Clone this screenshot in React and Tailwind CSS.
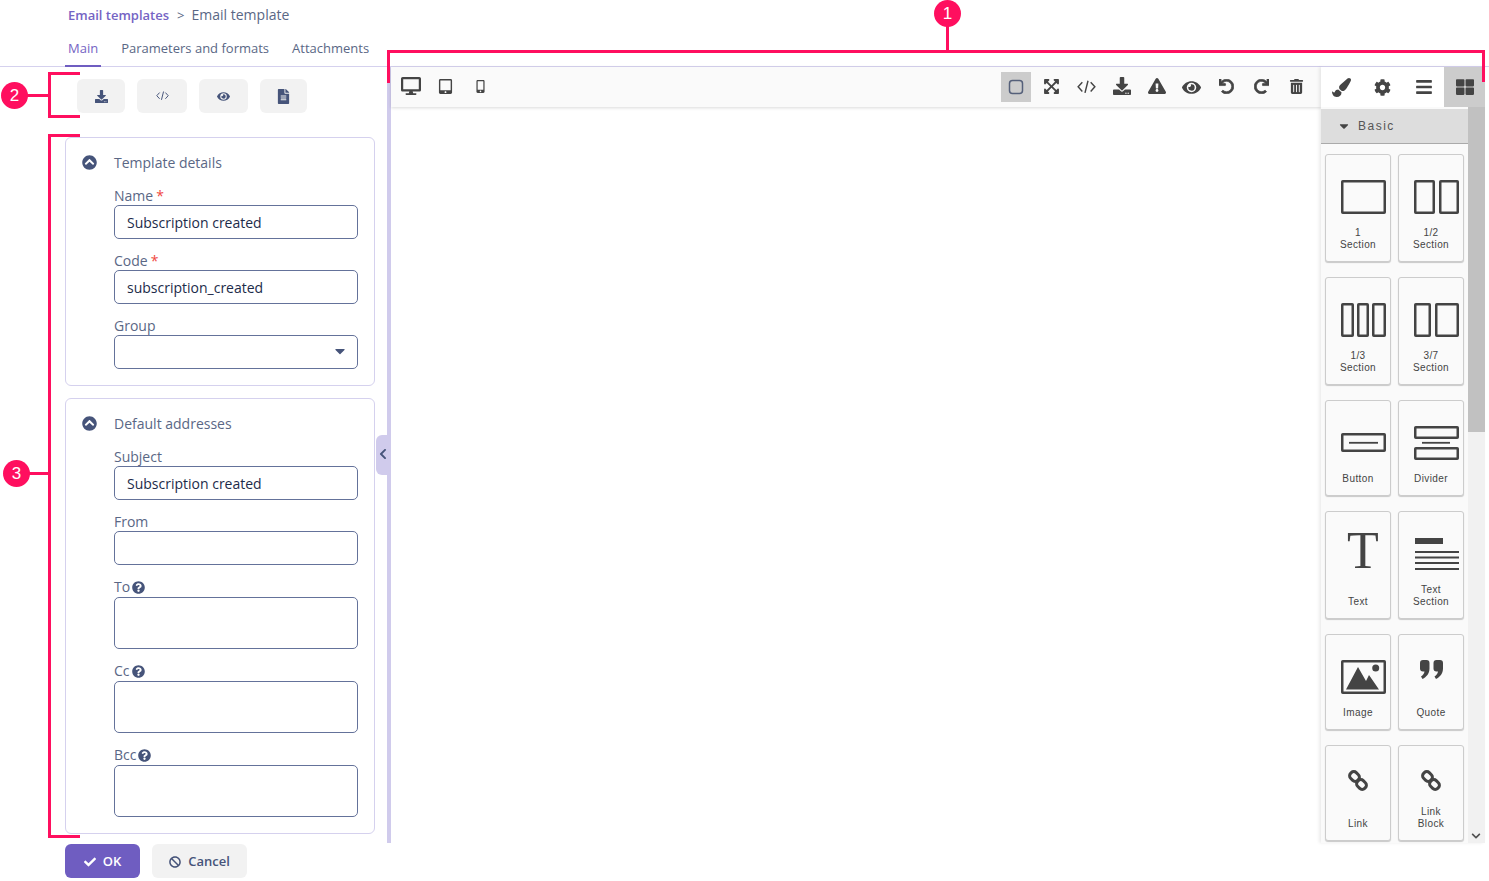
import {
    FaBan, FaBars, FaCaretDown, FaCheck, FaChevronCircleUp, FaChevronDown, FaChevronLeft, FaCog, FaDesktop,
    FaDownload, FaExclamationTriangle, FaExpandArrowsAlt, FaEye, FaFileAlt, FaMobileAlt, FaPaintBrush,
    FaQuestionCircle, FaRedo, FaTabletAlt, FaThLarge, FaTrashAlt, FaUndo,
} from "react-icons/fa";

const CodeIcon = ({ size = 19 }) => (
    <svg width={size} height={size * 0.72} viewBox="0 0 25 18" fill="none" stroke="currentColor" strokeWidth="1.9">
        <path d="M7 3 1.5 9 7 15M18 3l5.500 6-5.500 6M14.500 1l-4 16" />
    </svg>
);

const SectionRects = ({ rects }) => rects.map(([x, y, w, h]) => (
    <rect key={x + "-" + y} x={x + 1.25} y={y + 1.25} width={w - 2.5} height={h - 2.5} rx="0.5" fill="none" stroke="#444" strokeWidth="2.5" />
));

const quote = "M3 0h3.500a3 3 0 0 1 3 3v5.500c0 5-3 8.500-7 10.500l-1.500-2.500c2-1.200 3.200-2.800 3.500-5H3a3 3 0 0 1-3-3V3a3 3 0 0 1 3-3z";

const LinkArt = () => (
    <>
        <rect x="8.500" y="8.500" width="10" height="8" rx="3.500" transform="rotate(45 13.500 12.500)" fill="none" stroke="#444" strokeWidth="3" />
        <rect x="15.500" y="16.500" width="10" height="8" rx="3.500" transform="rotate(45 20.500 20.500)" fill="none" stroke="#444" strokeWidth="3" />
    </>
);

const blocks = [
    { lines: ["1", "Section"], h: "h-[108px]", art: <SectionRects rects={[[0, 7, 45, 34]]} /> },
    { lines: ["1/2", "Section"], h: "h-[108px]", art: <SectionRects rects={[[0, 7, 21, 34], [25, 7, 20, 34]]} /> },
    { lines: ["1/3", "Section"], h: "h-[108px]", art: <SectionRects rects={[[0, 7, 13, 34], [16, 7, 12, 34], [31, 7, 14, 34]]} /> },
    { lines: ["3/7", "Section"], h: "h-[108px]", art: <SectionRects rects={[[0, 7, 17, 34], [21, 7, 24, 34]]} /> },
    {
        lines: ["Button"], h: "h-[96px]",
        art: <>
            <SectionRects rects={[[0, 14, 45, 19]]} />
            <path d="M8 23.800h29" stroke="#444" strokeWidth="1.800" />
        </>,
    },
    {
        lines: ["Divider"], h: "h-[96px]",
        art: <>
            <SectionRects rects={[[0, 7, 45, 13], [0, 28, 45, 13]]} />
            <path d="M8 23.800h28" stroke="#444" strokeWidth="1.800" />
        </>,
    },
    {
        lines: ["Text"], h: "h-[108px]",
        art: <text x="22" y="38" textAnchor="middle" fontFamily="'Liberation Serif', serif" fontSize="52" fill="#444">T</text>,
    },
    {
        lines: ["Text", "Section"], h: "h-[108px]",
        art: <>
            <rect x="1" y="8" width="28" height="6" fill="#444" />
            <path d="M1 22h44M1 27.500h44M1 33h44M1 39h44" stroke="#444" strokeWidth="2" />
        </>,
    },
    {
        lines: ["Image"], h: "h-[96px]",
        art: <>
            <SectionRects rects={[[0, 7, 45, 34]]} />
            <path d="M5 36.500 17 14l8 14 3-6 10 14.500z" fill="#444" />
            <circle cx="34.700" cy="15" r="3.500" fill="#444" />
        </>,
    },
    {
        lines: ["Quote"], h: "h-[96px]",
        art: <>
            <path transform="translate(6 7)" d={quote} fill="#444" />
            <path transform="translate(19.500 7)" d={quote} fill="#444" />
        </>,
    },
    { lines: ["Link"], h: "h-[96px]", art: <LinkArt /> },
    { lines: ["Link", "Block"], h: "h-[96px]", art: <LinkArt /> },
];

const BlockCard = ({ block }) => (
    <div className={`flex flex-col justify-between rounded-[3px] border border-[#cccccc] bg-[#fafafa] shadow-[0_1px_1px_rgba(0,0,0,0.2)] pb-[10px] ${block.h}`}>
        <svg width="48" height="48" viewBox="0 0 48 48" className="ml-[15px] mt-[18px] -mb-[20px] shrink-0 overflow-visible">{block.art}</svg>
        <div className="text-center text-[10px] leading-[12px] tracking-[0.4px] text-[#444] font-['Liberation_Sans',sans-serif]">
            {block.lines.map((l) => <div key={l}>{l}</div>)}
        </div>
    </div>
);

const ToolBtn = ({ children, active, up }) => (
    <div className={`flex h-[30px] w-[30px] mx-[2.500px] items-center justify-center text-[#444] ${active ? "-translate-x-[1px] bg-[#cccccc]" : ""} ${up ? "pb-[2px]" : ""}`}>
        {children}
    </div>
);

const Label = ({ text, required, help }) => (
    <div className={`flex items-center text-[14px] text-[#5a6785] leading-[18px] ${help ? "h-[19px] pb-[1px]" : "h-[18px]"}`}>
        {text}
        {required && <span className="ml-[3px] text-[#f0483e]">*</span>}
        {help && <FaQuestionCircle size={13} className="ml-[2px] text-[#46547a]" />}
    </div>
);

const Field = ({ label, required, help, value, select, area, first }) => (
    <div className={first ? "" : "mt-[13px]"}>
        <Label text={label} required={required} help={help} />
        {area ? (
            <textarea readOnly className="block h-[52px] w-[244px] resize-none rounded-[5px] border border-[#64729a] outline-none" />
        ) : (
            <div className="relative">
                <input
                    readOnly
                    value={value || ""}
                    className="block h-[34px] w-[244px] rounded-[5px] border border-[#64729a] px-[12px] text-[14px] text-[#1c2b4a] outline-none"
                />
                {select && <FaCaretDown size={16} className="absolute right-[10px] top-[8px] text-[#46547a]" />}
            </div>
        )}
    </div>
);

const Card = ({ title, children, className }) => (
    <div className={`rounded-[6px] border border-[#d5d1ee] px-[16px] pb-[16px] ${className || ""}`}>
        <div className="flex h-[49px] items-start pt-[15px] text-[14px] leading-[20px] text-[#5a6785]">
            <FaChevronCircleUp size={15} className="mr-[17px] mt-[1.500px] text-[#46547a]" />
            {title}
        </div>
        <div className="pl-[32px]">{children}</div>
    </div>
);

const ActionBtn = ({ children, className }) => (
    <div className={`flex h-[34px] items-center justify-center rounded-[6px] bg-[#f2f2f2] text-[#46547a] ${className}`}>
        {children}
    </div>
);

const Badge = ({ n, className }) => (
    <div className={`absolute flex h-[27px] w-[27px] items-center justify-center rounded-full bg-[#ff0f5f] text-[17px] text-white font-['Liberation_Sans',sans-serif] ${className}`}>
        {n}
    </div>
);

const Line = ({ className }) => <div className={`absolute bg-[#ff0f5f] ${className}`} />;

export default function App() {
    return (
        <div className="relative h-[881px] w-[1489px] overflow-hidden bg-white font-['Open_Sans',sans-serif]">
            <div className="h-[67px] border-b border-[#d5d1ee]">
                <div className="flex h-[30px] items-baseline pl-[68px] pt-[4px] text-[14px] text-[#5a6785]">
                    <span className="text-[13px] font-semibold text-[#7564c4]">Email templates</span>
                    <span className="ml-[8px] mr-[7px] text-[13px]">&gt;</span>
                    <span>Email template</span>
                </div>
                <div className="ml-[65px] mt-[6px] flex h-[31px] gap-[17px] text-[13px] leading-[18px] text-[#5a6785]">
                    <div className="border-b-2 border-[#6f5dc1] px-[3px] pt-[3px] text-[#7564c4]">Main</div>
                    <div className="px-[3px] pt-[3px]">Parameters and formats</div>
                    <div className="px-[3px] pt-[3px]">Attachments</div>
                </div>
            </div>

            <div className="flex h-[776px] pr-[4px]">
                <div className="w-[387px] shrink-0 pl-[65px] pr-[12px]">
                    <div className="mt-[12px] flex gap-[12px] pl-[12px]">
                        <ActionBtn className="w-[48px]"><FaDownload size={13} /></ActionBtn>
                        <ActionBtn className="w-[50px]"><CodeIcon size={13} /></ActionBtn>
                        <ActionBtn className="w-[49px]"><FaEye size={13} /></ActionBtn>
                        <ActionBtn className="w-[47px]"><FaFileAlt size={15} /></ActionBtn>
                    </div>
                    <Card title="Template details" className="mt-[24px]">
                        <Field first label="Name" required value="Subscription created" />
                        <Field label="Code" required value="subscription_created" />
                        <Field label="Group" select />
                    </Card>
                    <Card title="Default addresses" className="mt-[12px]">
                        <Field first label="Subject" value="Subscription created" />
                        <Field label="From" />
                        <Field label="To" help area />
                        <Field label="Cc" help area />
                        <Field label="Bcc" help area />
                    </Card>
                </div>

                <div className="w-[4px] shrink-0 bg-[#d0cbec]" />

                <div className="h-[40px] flex-1 min-w-0">
                    <div className="flex h-[40px] items-center justify-between bg-[#fafafa] pl-[2px] pr-[7px] shadow-[0_1px_3px_rgba(0,0,0,0.15)]">
                        <div className="flex">
                            <ToolBtn up><FaDesktop size={20} /></ToolBtn>
                            <ToolBtn up><FaTabletAlt size={15} /></ToolBtn>
                            <ToolBtn up><FaMobileAlt size={13} /></ToolBtn>
                        </div>
                        <div className="flex">
                            <ToolBtn active>
                                <svg width="16" height="16" viewBox="0 0 16 16" fill="none" stroke="#55607a" strokeWidth="1.500">
                                    <rect x="1.500" y="1.500" width="13" height="13" rx="3" />
                                </svg>
                            </ToolBtn>
                            <ToolBtn up><FaExpandArrowsAlt size={17} /></ToolBtn>
                            <ToolBtn><CodeIcon /></ToolBtn>
                            <ToolBtn up><FaDownload size={18} /></ToolBtn>
                            <ToolBtn up><FaExclamationTriangle size={18} /></ToolBtn>
                            <ToolBtn><FaEye size={19} /></ToolBtn>
                            <ToolBtn up><FaUndo size={15} stroke="currentColor" strokeWidth={24} /></ToolBtn>
                            <ToolBtn up><FaRedo size={15} stroke="currentColor" strokeWidth={24} /></ToolBtn>
                            <ToolBtn up><FaTrashAlt size={15} /></ToolBtn>
                        </div>
                    </div>
                </div>

                <div className="flex w-[164px] shrink-0 flex-col bg-white shadow-[-2px_0_3px_rgba(0,0,0,0.08)]">
                    <div className="flex h-[40px] shrink-0 text-[#444]">
                        <div className="flex w-[41px] items-center justify-center"><FaPaintBrush size={19} /></div>
                        <div className="flex w-[41px] items-center justify-center"><FaCog size={17} /></div>
                        <div className="flex w-[41px] items-center justify-center"><FaBars size={18} /></div>
                        <div className="flex w-[41px] items-center justify-center bg-[#cccccc]"><FaThLarge size={18} /></div>
                    </div>
                    <div className="flex min-h-0 flex-1">
                        <div className="w-[147px] overflow-hidden bg-[#fafafa] pt-[2px]">
                            <div className="flex h-[35px] items-center border-b border-[#aaaaaa] bg-[#dddddd] pl-[16px] text-[12px] tracking-[1.500px] text-[#555] font-['Liberation_Sans',sans-serif]">
                                <FaCaretDown size={14} className="mr-[7px] text-[#444]" />
                                Basic
                            </div>
                            <div className="grid grid-cols-[66px_66px] gap-x-[7px] gap-y-[15px] pl-[4px] pt-[10px]">
                                {blocks.map((b, i) => <BlockCard key={i} block={b} />)}
                            </div>
                        </div>
                        <div className="flex w-[17px] flex-col justify-between bg-[#f1f1f1]">
                            <div className="h-[325px] bg-[#c1c1c1]" />
                            <FaChevronDown size={10} className="mb-[2px] ml-[3px] text-[#505050]" />
                        </div>
                    </div>
                </div>
            </div>

            <div className="flex gap-[12px] pl-[65px] pt-[1px]">
                <div className="flex h-[34px] w-[75px] items-center justify-center gap-[7px] rounded-[6px] bg-[#6f5dc1] pt-[2px] text-[13px] font-semibold text-white">
                    <FaCheck size={12} />OK
                </div>
                <ActionBtn className="w-[95px] gap-[7px] pt-[2px] text-[13px] font-semibold">
                    <FaBan size={12} />Cancel
                </ActionBtn>
            </div>

            {/* collapse handle for the left panel */}
            <div className="absolute left-[376px] top-[435px] flex h-[40px] w-[14px] items-center justify-center rounded-l-[6px] bg-[#d0cbec] pb-[2px] text-[#46547a]">
                <FaChevronLeft size={12} />
            </div>

            {/* numbered callouts lying over the screenshot */}
            <Line className="left-[387px] top-[50px] h-[3px] w-[1098px]" />
            <Line className="left-[387px] top-[50px] h-[33px] w-[3px]" />
            <Line className="left-[1482px] top-[50px] h-[32px] w-[3px]" />
            <Line className="left-[946px] top-[24px] h-[27px] w-[3px]" />
            <Badge n="1" className="left-[934px] top-[0px]" />

            <Line className="left-[48px] top-[72px] h-[46px] w-[3px]" />
            <Line className="left-[48px] top-[72px] h-[3px] w-[32px]" />
            <Line className="left-[48px] top-[115px] h-[3px] w-[32px]" />
            <Line className="left-[26px] top-[94px] h-[3px] w-[23px]" />
            <Badge n="2" className="left-[1px] top-[82px]" />

            <Line className="left-[48px] top-[134px] h-[703px] w-[3px]" />
            <Line className="left-[48px] top-[134px] h-[3px] w-[32px]" />
            <Line className="left-[48px] top-[835px] h-[3px] w-[32px]" />
            <Line className="left-[28px] top-[472px] h-[3px] w-[21px]" />
            <Badge n="3" className="left-[3px] top-[460px]" />
        </div>
    );
}
